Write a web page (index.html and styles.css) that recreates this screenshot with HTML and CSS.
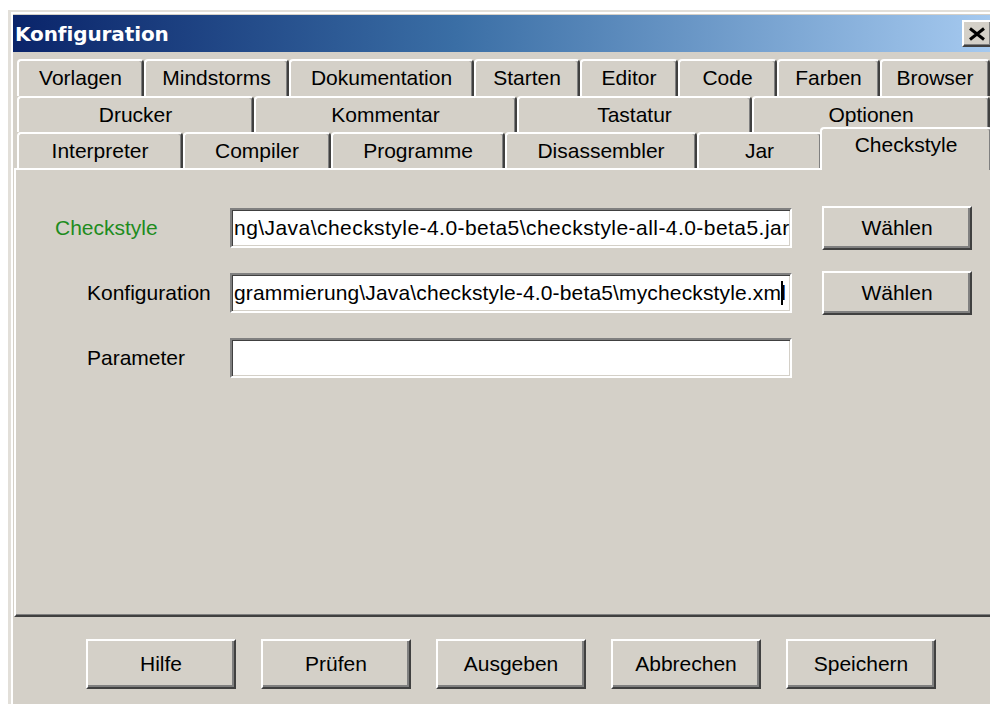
FILE: index.html
```html
<!DOCTYPE html>
<html lang="de">
<head>
<meta charset="utf-8">
<title>Konfiguration</title>
<link rel="stylesheet" href="styles.css">
</head>
<body>
<div class="window">
  <div class="frame">
    <div class="titlebar">
      <span class="title">Konfiguration</span>
      <button class="close" type="button" aria-label="Schließen">
        <svg width="18" height="14" viewBox="0 0 18 14"><path d="M2 1.5 L16 12.5 M16 1.5 L2 12.5" stroke="#000" stroke-width="3" fill="none"/></svg>
      </button>
    </div>

    <div class="tabs">
      <div class="tab-row row-a">
        <div class="tab">Vorlagen</div>
        <div class="tab">Mindstorms</div>
        <div class="tab">Dokumentation</div>
        <div class="tab">Starten</div>
        <div class="tab">Editor</div>
        <div class="tab">Code</div>
        <div class="tab">Farben</div>
        <div class="tab">Browser</div>
      </div>
      <div class="tab-row row-b">
        <div class="tab">Drucker</div>
        <div class="tab">Kommentar</div>
        <div class="tab">Tastatur</div>
        <div class="tab">Optionen</div>
      </div>
      <div class="tab-row row-c">
        <div class="tab">Interpreter</div>
        <div class="tab">Compiler</div>
        <div class="tab">Programme</div>
        <div class="tab">Disassembler</div>
        <div class="tab">Jar</div>
        <div class="tab selected">Checkstyle</div>
      </div>
    </div>

    <div class="panel">
      <div class="form">
        <label class="field-label accent">Checkstyle</label>
        <div class="field"><span class="value">ng\Java\checkstyle-4.0-beta5\checkstyle-all-4.0-beta5.jar</span></div>
        <button class="btn pick" type="button">Wählen</button>

        <label class="field-label">Konfiguration</label>
        <div class="field tight"><span class="value">grammierung\Java\checkstyle-4.0-beta5\mycheckstyle.xml</span><span class="caret"></span></div>
        <button class="btn pick" type="button">Wählen</button>

        <label class="field-label">Parameter</label>
        <div class="field"></div>
        <span></span>
      </div>
    </div>

    <div class="actions">
      <button class="btn action" type="button">Hilfe</button>
      <button class="btn action" type="button">Prüfen</button>
      <button class="btn action" type="button">Ausgeben</button>
      <button class="btn action" type="button">Abbrechen</button>
      <button class="btn action" type="button">Speichern</button>
    </div>
  </div>
</div>
</body>
</html>
```

FILE: styles.css
```css
html, body {
  margin: 0;
  padding: 0;
  background: #ffffff;
  overflow: hidden;
}

body {
  font-family: "Liberation Sans", Arial, sans-serif;
  font-size: 21px;
  color: #000;
}

/* window chrome */
.window {
  box-sizing: border-box;
  width: 991px;
  height: 720px;
  margin: 10px 0 0 8px;
  background: #d4d0c8;
  border-top: 2px solid #e2dfd9;
  border-left: 3px solid #e2dfd9;
  border-right: 3px solid #404040;
}

.frame {
  height: 100%;
  box-sizing: border-box;
  border-top: 2px solid #ffffff;
  border-left: 2px solid #ffffff;
  border-right: 2px solid #808080;
  padding-top: 1px;
}

.titlebar {
  height: 37px;
  display: flex;
  align-items: center;
  justify-content: space-between;
  padding-left: 2px;
  padding-right: 2px;
  background: linear-gradient(to right, #0a246a 0%, #3a6ea5 45%, #a6caf0 100%);
}

.title {
  font-family: "DejaVu Sans", Verdana, sans-serif;
  font-weight: bold;
  font-size: 20px;
  color: #ffffff;
  letter-spacing: -0.1px;
}

.close {
  box-sizing: border-box;
  width: 30px;
  height: 27px;
  padding: 0;
  margin: 0;
  display: flex;
  align-items: center;
  justify-content: center;
  background: #d4d0c8;
  border: 2px solid;
  border-color: #ffffff #404040 #404040 #ffffff;
  box-shadow: inset -1px -1px #808080;
}

.close svg {
  display: block;
}

/* tab strip */
.tabs {
  margin: 7px 4px 0 4px;
}

.tab-row {
  display: grid;
}

.row-a {
  height: 37px;
  grid-template-columns: 127px 145px 185px 106px 98px 99px 103px 110px;
}

.row-b {
  height: 36px;
  grid-template-columns: 237px 263px 235px 238px;
}

.row-c {
  height: 36px;
  grid-template-columns: 166px 148px 174px 192px 125px 168px;
}

.tab {
  box-sizing: border-box;
  background: #d4d0c8;
  border-top: 2px solid #ffffff;
  border-left: 2px solid #ffffff;
  border-right: 2px solid #404040;
  border-radius: 4px 4px 0 0;
  box-shadow: inset -1px 0 #808080;
  text-align: center;
  padding-top: 5px;
  line-height: 24px;
  white-space: nowrap;
}

.tab.selected {
  position: relative;
  z-index: 1;
  margin: -5px -2px -2px -2px;
  padding-top: 4px;
}

/* page of the selected tab */
.panel {
  box-sizing: border-box;
  height: 449px;
  margin: 0 1px;
  border-top: 2px solid #ffffff;
  border-left: 2px solid #ffffff;
  border-bottom: 2px solid #404040;
  box-shadow: inset 0 -1px #808080;
  padding-top: 36px;
}

.form {
  display: grid;
  grid-template-columns: 214px 562px 180px;
  grid-auto-rows: 44px;
  row-gap: 21px;
  align-items: center;
}

.field-label {
  padding-left: 71px;
  line-height: 24px;
}

.field-label.accent {
  padding-left: 39px;
  color: #1e8c1e;
}

.field {
  box-sizing: border-box;
  height: 40px;
  display: flex;
  align-items: center;
  overflow: hidden;
  white-space: nowrap;
  background: #ffffff;
  border: 2px solid;
  border-color: #808080 #ffffff #ffffff #808080;
  box-shadow: inset 1px 1px #404040, inset -1px -1px #d4d0c8;
  padding: 0 1px 0 2px;
  letter-spacing: 0.45px;
}

.field.tight {
  letter-spacing: 0.15px;
}

.field .value {
  flex: none;
  line-height: 24px;
}

.caret {
  flex: none;
  width: 2px;
  height: 24px;
  margin-left: -5px;
  background: #000;
}

/* push buttons */
.btn {
  box-sizing: border-box;
  margin: 0;
  padding: 0;
  font-family: inherit;
  font-size: 21px;
  color: #000;
  background: #d4d0c8;
  border: 2px solid;
  border-color: #ffffff #404040 #404040 #ffffff;
  box-shadow: inset -2px -2px #808080;
  border-radius: 0;
}

.btn.pick {
  justify-self: end;
  width: 150px;
  height: 44px;
}

.actions {
  display: flex;
  gap: 25px;
  padding: 22px 0 0 73px;
}

.btn.action {
  width: 150px;
  height: 50px;
}
```
